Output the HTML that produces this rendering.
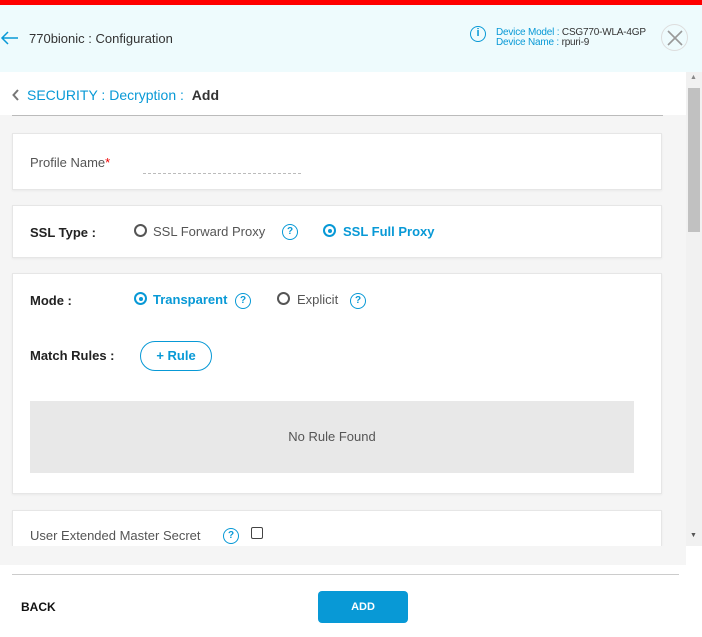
<!DOCTYPE html>
<html><head><meta charset="utf-8"><style>
*{box-sizing:border-box;margin:0;padding:0}
body{width:702px;height:637px;overflow:hidden;font-family:"Liberation Sans",sans-serif;background:#fff;position:relative;color:#333}
.abs{position:absolute}
.card{position:absolute;left:12px;width:650px;background:#fff;border:1px solid #e6e6e6;box-shadow:0 1px 2px rgba(0,0,0,.05)}
.lbl{position:absolute;font-size:13px;font-weight:bold;color:#222}
.t{position:absolute;font-size:13px;white-space:nowrap}
.radio{position:absolute;width:13px;height:13px;border:2px solid #555;border-radius:50%}
.radio.on{border-color:#0899d6}
.radio.on:after{content:"";position:absolute;left:2.5px;top:2.5px;width:4px;height:4px;border-radius:50%;background:#0899d6}
.q{position:absolute;width:16px;height:16px;border:1.5px solid #0899d6;border-radius:50%;color:#0899d6;font-size:10px;font-weight:bold;text-align:center;line-height:13px}
.blue{color:#0899d6}
</style></head><body>
<div class="abs" style="left:0;top:0;width:702px;height:5px;background:#f00"></div>
<div class="abs" style="left:0;top:5px;width:702px;height:67px;background:#eefbfd;box-shadow:0 2px 4px rgba(0,0,0,.08)"></div>
<svg class="abs" style="left:0;top:30px" width="20" height="16"><path d="M18 8H2M8 2L2 8l6 6" stroke="#0899d6" stroke-width="1.5" fill="none"/></svg>
<div class="t" style="left:29px;top:31px;font-size:13px;color:#333">770bionic : Configuration</div>
<div class="q" style="left:470px;top:26px;font-size:11px">i</div>
<div class="t" style="left:496px;top:28px;font-size:10px;line-height:10px;letter-spacing:-0.2px"><span class="blue">Device Model :</span> CSG770-WLA-4GP<br><span class="blue">Device Name :</span> rpuri-9</div>
<div class="abs" style="left:661px;top:24px;width:27px;height:27px;border:1px solid #ddd;border-radius:50%"></div>
<svg class="abs" style="left:665px;top:28px" width="20" height="20"><path d="M3 3L17 17M17 3L3 17" stroke="#999" stroke-width="1.6"/></svg>

<div class="abs" style="left:0;top:72px;width:686px;height:493px;background:#f5f5f5"></div>
<div class="abs" style="left:0;top:72px;width:686px;height:43px;background:#fff"></div>
<div class="abs" style="left:12px;top:115px;width:651px;height:1px;background:#bbb"></div>
<svg class="abs" style="left:11px;top:88px" width="10" height="14"><path d="M7 2L2.5 7L7 12" stroke="#777" stroke-width="2" fill="none"/></svg>
<div class="t" style="left:27px;top:87px;font-size:14px"><span class="blue">SECURITY : Decryption :</span> <span style="font-weight:bold;color:#333;margin-left:4px">Add</span></div>
<div class="abs" style="left:686px;top:72px;width:16px;height:474px;background:#f1f1f1"></div>
<div class="abs" style="left:688px;top:88px;width:12px;height:144px;background:#c1c1c1"></div>
<div class="t" style="left:690px;top:74px;font-size:7px;color:#888">▲</div>
<div class="t" style="left:690px;top:532px;font-size:7px;color:#555">▼</div>

<div class="card" style="top:133px;height:57px">
<div class="t" style="left:17px;top:21px;color:#555">Profile Name<span style="color:#e00">*</span></div>
<div class="abs" style="left:130px;top:39px;width:158px;border-top:1px dashed #bbb"></div>
</div>
<div class="card" style="top:205px;height:53px">
<div class="lbl" style="left:17px;top:19px">SSL Type :</div>
<div class="radio" style="left:121px;top:18px"></div>
<div class="t" style="left:140px;top:18px;color:#555">SSL Forward Proxy</div>
<div class="q" style="left:269px;top:18px">?</div>
<div class="radio on" style="left:310px;top:18px"></div>
<div class="t blue" style="left:330px;top:18px;font-weight:bold">SSL Full Proxy</div>
</div>
<div class="card" style="top:273px;height:221px">
<div class="lbl" style="left:17px;top:19px">Mode :</div>
<div class="radio on" style="left:121px;top:18px"></div>
<div class="t blue" style="left:140px;top:18px;font-weight:bold">Transparent</div>
<div class="q" style="left:222px;top:19px">?</div>
<div class="radio" style="left:264px;top:18px"></div>
<div class="t" style="left:284px;top:18px;color:#555">Explicit</div>
<div class="q" style="left:337px;top:19px">?</div>
<div class="lbl" style="left:17px;top:74px">Match Rules :</div>
<div class="abs" style="left:127px;top:67px;width:72px;height:30px;border:1px solid #0899d6;border-radius:15px;color:#0899d6;font-weight:bold;font-size:13px;text-align:center;line-height:28px">+ Rule</div>
<div class="abs" style="left:17px;top:127px;width:604px;height:72px;background:#e8e8e8;color:#555;font-size:13px;text-align:center;line-height:72px">No Rule Found</div>
</div>
<div class="card" style="top:510px;height:36px;border-bottom:none">
<div class="t" style="left:17px;top:17px;color:#555">User Extended Master Secret</div>
<div class="q" style="left:210px;top:17px">?</div>
<div class="abs" style="left:238px;top:16px;width:12px;height:12px;border:1.5px solid #444;border-radius:2px"></div>
</div>
<div class="abs" style="left:0;top:546px;width:686px;height:19px;background:#f5f5f5"></div>
<div class="abs" style="left:12px;top:574px;width:667px;height:1px;background:#ccc"></div>
<div class="t" style="left:21px;top:600px;font-size:12px;font-weight:bold;color:#111">BACK</div>
<div class="abs" style="left:318px;top:591px;width:90px;height:32px;background:#0899d6;border-radius:4px;color:#fff;font-size:11px;font-weight:bold;text-align:center;line-height:32px">ADD</div>
</body></html>
